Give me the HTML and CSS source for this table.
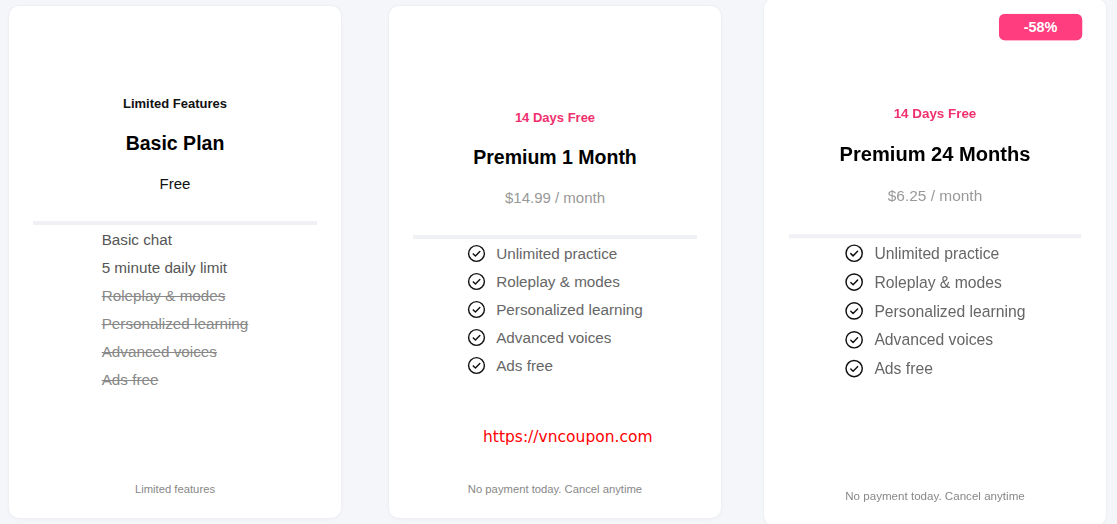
FILE: index.html
```html
<!DOCTYPE html>
<html lang="en">
<head>
<meta charset="utf-8">
<title>Plans</title>
<link rel="stylesheet" href="styles.css">
</head>
<body>
<div class="plans">
  <div class="card">
    <div class="main">
      <div class="tag tag-dark">Limited Features</div>
      <div class="title">Basic Plan</div>
      <div class="price price-dark">Free</div>
      <div class="divider"></div>
      <ul class="features plain">
        <li>Basic chat</li>
        <li>5 minute daily limit</li>
        <li class="off">Roleplay &amp; modes</li>
        <li class="off">Personalized learning</li>
        <li class="off">Advanced voices</li>
        <li class="off">Ads free</li>
      </ul>
    </div>
    <div class="foot">Limited features</div>
  </div>

  <div class="card">
    <div class="main">
      <div class="tag">14 Days Free</div>
      <div class="title">Premium 1 Month</div>
      <div class="price">$14.99 / month</div>
      <div class="divider"></div>
      <ul class="features">
        <li><svg class="chk" viewBox="0 0 20 20"><circle cx="10" cy="10" r="8.3"/><path d="M6.6 10.4l2.3 2.3 4.6-4.7"/></svg>Unlimited practice</li>
        <li><svg class="chk" viewBox="0 0 20 20"><circle cx="10" cy="10" r="8.3"/><path d="M6.6 10.4l2.3 2.3 4.6-4.7"/></svg>Roleplay &amp; modes</li>
        <li><svg class="chk" viewBox="0 0 20 20"><circle cx="10" cy="10" r="8.3"/><path d="M6.6 10.4l2.3 2.3 4.6-4.7"/></svg>Personalized learning</li>
        <li><svg class="chk" viewBox="0 0 20 20"><circle cx="10" cy="10" r="8.3"/><path d="M6.6 10.4l2.3 2.3 4.6-4.7"/></svg>Advanced voices</li>
        <li><svg class="chk" viewBox="0 0 20 20"><circle cx="10" cy="10" r="8.3"/><path d="M6.6 10.4l2.3 2.3 4.6-4.7"/></svg>Ads free</li>
      </ul>
    </div>
    <div class="watermark">https://vncoupon.com</div>
    <div class="foot">No payment today. Cancel anytime</div>
  </div>

  <div class="card featured">
    <div class="badge">-58%</div>
    <div class="main">
      <div class="tag">14 Days Free</div>
      <div class="title">Premium 24 Months</div>
      <div class="price">$6.25 / month</div>
      <div class="divider"></div>
      <ul class="features">
        <li><svg class="chk" viewBox="0 0 20 20"><circle cx="10" cy="10" r="8.3"/><path d="M6.6 10.4l2.3 2.3 4.6-4.7"/></svg>Unlimited practice</li>
        <li><svg class="chk" viewBox="0 0 20 20"><circle cx="10" cy="10" r="8.3"/><path d="M6.6 10.4l2.3 2.3 4.6-4.7"/></svg>Roleplay &amp; modes</li>
        <li><svg class="chk" viewBox="0 0 20 20"><circle cx="10" cy="10" r="8.3"/><path d="M6.6 10.4l2.3 2.3 4.6-4.7"/></svg>Personalized learning</li>
        <li><svg class="chk" viewBox="0 0 20 20"><circle cx="10" cy="10" r="8.3"/><path d="M6.6 10.4l2.3 2.3 4.6-4.7"/></svg>Advanced voices</li>
        <li><svg class="chk" viewBox="0 0 20 20"><circle cx="10" cy="10" r="8.3"/><path d="M6.6 10.4l2.3 2.3 4.6-4.7"/></svg>Ads free</li>
      </ul>
    </div>
    <div class="foot">No payment today. Cancel anytime</div>
  </div>
</div>
</body>
</html>
```

FILE: styles.css
```css
html, body {
  margin: 0;
  padding: 0;
  background: #f5f6fa;
  font-family: "Liberation Sans", Arial, sans-serif;
  overflow: hidden;
}

.plans {
  display: flex;
  gap: 48px;
  padding: 6px 9px;
}

.card {
  position: relative;
  width: 332px;
  height: 512px;
  flex: none;
  box-sizing: border-box;
  background: #fff;
  border-radius: 10px;
  box-shadow: 0 0 0 1px #eef0f4, 0 1px 4px rgba(20, 30, 60, 0.03);
  display: flex;
  flex-direction: column;
  padding: 0 0 22px;
}

.featured {
  transform: scale(1.03);
}

.main {
  flex: 1;
  display: flex;
  flex-direction: column;
  justify-content: center;
  align-items: center;
}

.tag {
  font-size: 13px;
  line-height: 18px;
  font-weight: bold;
  color: #f0306e;
}

.tag-dark {
  color: #111;
}

.title {
  margin-top: 18px;
  font-size: 19.5px;
  line-height: 24px;
  font-weight: bold;
  color: #000;
}

.price {
  margin-top: 19px;
  font-size: 15px;
  line-height: 20px;
  color: #999;
}

.price-dark {
  color: #111;
}

.divider {
  align-self: stretch;
  margin: 27px 24px 1px;
  height: 4px;
  background: #f0f1f5;
}

.features {
  list-style: none;
  margin: 0;
  padding: 0;
}

.features li {
  display: flex;
  align-items: center;
  gap: 10px;
  font-size: 15.25px;
  line-height: 28px;
  color: #666;
}

.plain li {
  color: #555;
}

.plain li.off {
  color: #888;
  text-decoration: line-through;
}

.chk {
  width: 19px;
  height: 19px;
  flex: none;
  fill: none;
  stroke: #111;
  stroke-width: 1.5;
  stroke-linecap: round;
  stroke-linejoin: round;
}

.foot {
  text-align: center;
  font-size: 11.25px;
  line-height: 14px;
  color: #888;
}

.badge {
  position: absolute;
  top: 15px;
  right: 23px;
  width: 81px;
  height: 26px;
  border-radius: 6px;
  background: #ff3d7f;
  color: #fff;
  font-size: 14px;
  font-weight: bold;
  line-height: 26px;
  text-align: center;
}

.watermark {
  position: absolute;
  left: 94px;
  top: 421px;
  font-family: "DejaVu Sans", sans-serif;
  font-size: 15.5px;
  line-height: 20px;
  color: #ff0000;
}
```
